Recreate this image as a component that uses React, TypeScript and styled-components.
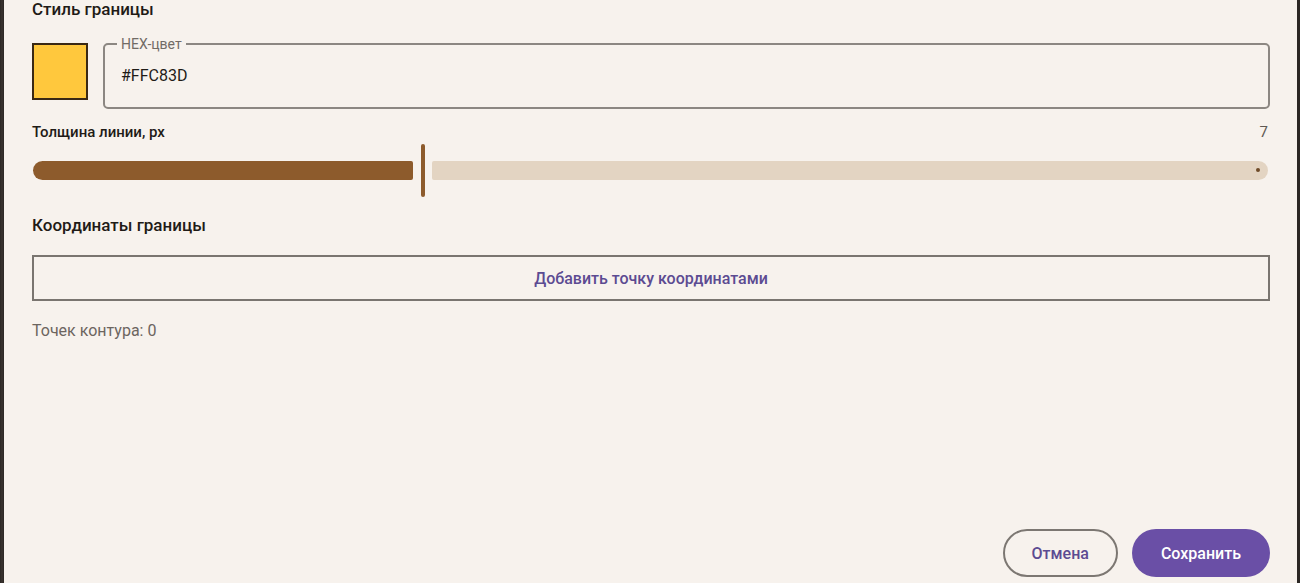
import React from "react";
import styled, { createGlobalStyle } from "styled-components";

const GlobalStyle = createGlobalStyle`
  html, body {
    margin: 0;
    padding: 0;
    height: 100%;
    background: #2a2623;
    font-family: Roboto, "Noto Sans", "Liberation Sans", sans-serif;
  }
  #root { height: 100%; }
  * { box-sizing: border-box; }
`;

const Frame = styled.div`
  height: 583px;
  display: flex;
  padding: 0 3px 0 4px;
  background: linear-gradient(90deg, #2b2724 0, #3a3430 2px, #2b2724 4px);
  overflow: hidden;
`;

const Panel = styled.div`
  flex: 1;
  background: #f7f2ed;
  display: flex;
  flex-direction: column;
  padding: 0 27px 6px 28px;
`;

const SectionTitle = styled.div<{ $mt?: number; $lh?: number }>`
  font-size: 17px;
  font-weight: 500;
  color: #1f1b17;
  line-height: ${(p) => p.$lh ?? 20}px;
  margin-top: ${(p) => p.$mt ?? 0}px;
`;

const ColorRow = styled.div`
  display: flex;
  align-items: flex-start;
  gap: 15px;
  margin-top: 18px;
`;

const Swatch = styled.div<{ $color: string }>`
  width: 56px;
  height: 57px;
  margin-top: 7px;
  background: ${(p) => p.$color};
  border: 2px solid #3a2914;
  flex: 0 0 auto;
`;

const Field = styled.fieldset`
  flex: 1;
  margin: 0;
  height: 73px;
  padding: 14px 16px 0 16px;
  border: 2px solid #8c8782;
  border-radius: 5px;
  min-width: 0;
`;

const FieldLabel = styled.legend`
  font-size: 14px;
  line-height: 16px;
  color: #716b66;
  padding: 0 4px;
  margin-left: -4px;
`;

const FieldValue = styled.div`
  font-size: 16px;
  line-height: 20px;
  color: #1f1b17;
`;

const LabelRow = styled.div`
  display: flex;
  justify-content: space-between;
  align-items: center;
  margin-top: 13px;
  line-height: 20px;
`;

const SmallLabel = styled.span`
  font-size: 15px;
  font-weight: 500;
  color: #1f1b17;
`;

const ValueText = styled.span`
  font-size: 15px;
  color: #5f5954;
  margin-right: 2px;
`;

const Slider = styled.div`
  display: flex;
  align-items: center;
  height: 54px;
  margin-top: 1px;
  padding: 0 2px 0 1px;
`;

const ActiveTrack = styled.div`
  height: 19px;
  background: #8d5b2c;
  border-radius: 10px 2px 2px 10px;
  flex: 0 0 auto;
`;

const Thumb = styled.div`
  width: 4px;
  height: 53px;
  margin: 0 7px 0 8px;
  border-radius: 2px;
  background: #8d5b2c;
  flex: 0 0 auto;
`;

const InactiveTrack = styled.div`
  position: relative;
  flex: 1;
  height: 19px;
  background: #e3d4c2;
  border-radius: 2px 10px 10px 2px;
`;

const StopDot = styled.span`
  position: absolute;
  right: 8px;
  top: 50%;
  width: 4px;
  height: 4px;
  margin-top: -2px;
  border-radius: 50%;
  background: #6e4a28;
`;

const AddButton = styled.button`
  margin-top: 20px;
  height: 46px;
  width: 100%;
  border: 2px solid #7a7570;
  border-radius: 0;
  background: transparent;
  font-family: inherit;
  font-size: 16px;
  font-weight: 500;
  color: #5c4b92;
`;

const CountText = styled.div`
  margin-top: 20px;
  font-size: 16px;
  line-height: 20px;
  color: #6c655f;
`;

const Footer = styled.div`
  margin-top: auto;
  display: flex;
  justify-content: flex-end;
  gap: 14px;
`;

const PillButton = styled.button<{ $primary?: boolean }>`
  height: 48px;
  padding: 0 ${(p) => (p.$primary ? 29 : 27)}px;
  border-radius: 24px;
  font-family: inherit;
  font-size: 16px;
  font-weight: 500;
  border: ${(p) => (p.$primary ? "none" : "2px solid #7c7772")};
  background: ${(p) => (p.$primary ? "#6a4fa6" : "transparent")};
  color: ${(p) => (p.$primary ? "#ffffff" : "#5c4b92")};
`;

export default function App() {
  const value = 7;
  const min = 1;
  const max = 20;
  const pct = ((value - min) / (max - min)) * 100;
  return (
    <>
      <GlobalStyle />
      <Frame>
        <Panel>
          <SectionTitle $lh={18}>Стиль границы</SectionTitle>
          <ColorRow>
            <Swatch $color="#FFC83D" />
            <Field>
              <FieldLabel>HEX-цвет</FieldLabel>
              <FieldValue>#FFC83D</FieldValue>
            </Field>
          </ColorRow>
          <LabelRow>
            <SmallLabel>Толщина линии, px</SmallLabel>
            <ValueText>{value}</ValueText>
          </LabelRow>
          <Slider>
            <ActiveTrack style={{ width: `calc(${pct}% - 10px)` }} />
            <Thumb />
            <InactiveTrack>
              <StopDot />
            </InactiveTrack>
          </Slider>
          <SectionTitle $mt={18}>Координаты границы</SectionTitle>
          <AddButton>Добавить точку координатами</AddButton>
          <CountText>Точек контура: 0</CountText>
          <Footer>
            <PillButton>Отмена</PillButton>
            <PillButton $primary>Сохранить</PillButton>
          </Footer>
        </Panel>
      </Frame>
    </>
  );
}
